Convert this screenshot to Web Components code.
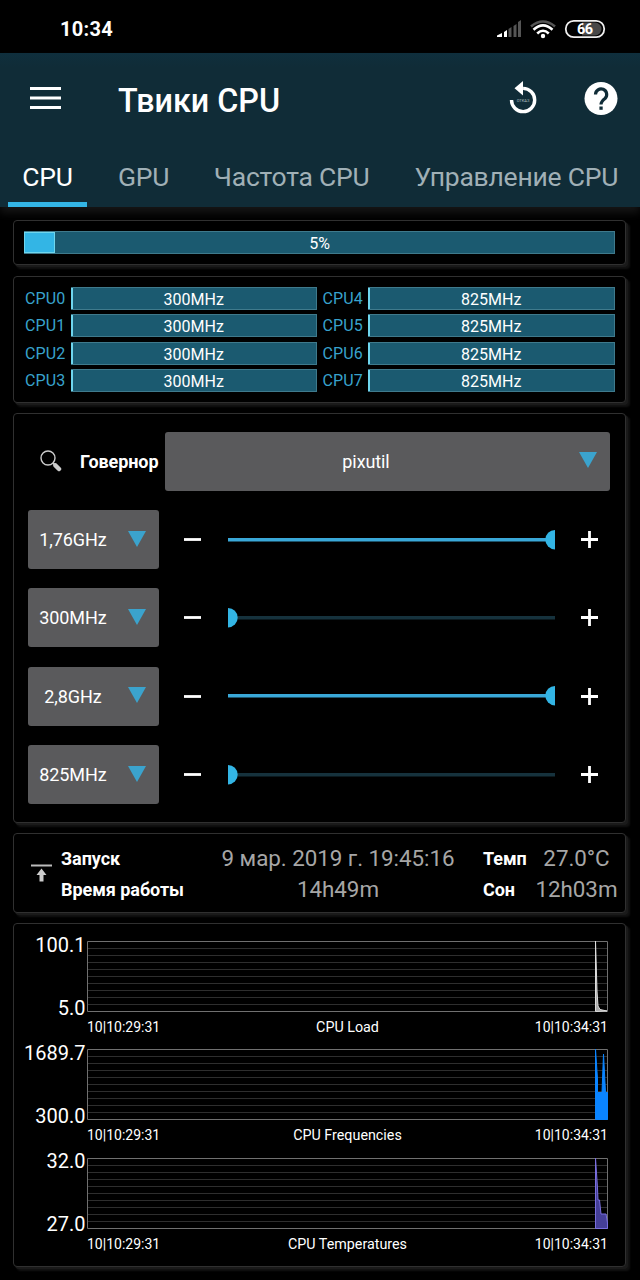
<!DOCTYPE html>
<html lang="ru">
<head>
<meta charset="utf-8">
<title>Твики CPU</title>
<style>
  body {
    margin: 0;
    width: 640px;
    height: 1280px;
    overflow: hidden;
    background: #000;
    color: #fff;
    font-family: Roboto, "Noto Sans", sans-serif;
  }
</style>
</head>
<body>
<tweak-app></tweak-app>
<script>
class StatusBar extends HTMLElement {
  constructor() {
    super();
    this.attachShadow({ mode: 'open' });
    this.shadowRoot.innerHTML = `
      <style>
        :host {
          display: flex;
          align-items: center;
          box-sizing: border-box;
          height: 53px;
          padding: 4px 34px 0 60px;
          font-size: 20px;
          font-weight: 700;
          letter-spacing: .3px;
        }
        .time { flex: 1; }
        svg { display: block; }
      </style>
      <span class="time">10:34</span>
      <svg width="110" height="22" viewBox="496 17 110 22">
        <path d="M497 36v-1.500l5-2.500v4z" fill="#fff"/>
        <path d="M504 31l3-2v7h-3z" fill="#fff"/>
        <path d="M508.500 28l3-2v10h-3zM513.500 25l3-2v13h-3zM518 21l3-2v17h-3z" fill="#555"/>
        <g fill="none" stroke-width="2.600">
          <path d="M531 25.500Q543 15.500 555 25.500" stroke="#555"/>
          <path d="M533.500 28.700Q543 20 552.500 28.700M537.200 32.500Q543 27 548.800 32.500" stroke="#fff"/>
        </g>
        <circle cx="543" cy="35" r="2.200" fill="#fff"/>
        <path d="M582 21.500h13a6.500 6.500 0 0 1 0 13h-13z" fill="#484848"/>
        <rect x="565.800" y="19.800" width="38.400" height="16.400" rx="8" fill="none" stroke="#eee" stroke-width="1.800"/>
        <text x="584.800" y="33.200" text-anchor="middle" font-size="14.500" font-weight="700" letter-spacing="-.5" fill="#fff">66</text>
      </svg>
    `;
  }
}
customElements.define('status-bar', StatusBar);

class AppBar extends HTMLElement {
  constructor() {
    super();
    this.attachShadow({ mode: 'open' });
    this.shadowRoot.innerHTML = `
      <style>
        :host {
          display: block;
          box-sizing: border-box;
          height: 154px;
          background: linear-gradient(#0f2f3d, #102c37 14px);
          box-shadow: 0 6px 8px #151515;
        }
        .top {
          display: flex;
          align-items: center;
          height: 93px;
          padding-left: 30px;
        }
        .title {
          flex: 1;
          margin: 2px 0 0 57px;
          font-size: 32.3px;
          font-weight: 500;
        }
        .tabs {
          display: flex;
          height: 61px;
        }
        svg { display: block; }
        .menu { margin-top: -4px; }
      </style>
      <div class="top">
        <svg class="menu" width="31" height="22" viewBox="0 0 31 22">
          <path d="M0 1.500h31M0 11h31M0 20.500h31" stroke="#fff" stroke-width="3"/>
        </svg>
        <span class="title">Твики CPU</span>
        <svg width="135" height="40" viewBox="505 80 135 40">
          <path d="M511.500 100a11.600 11.600 0 1 0 11.600-11.600" fill="none" stroke="#fff" stroke-width="3.400"/>
          <path d="M514.500 88.200l8.500-7.200v14.500z" fill="#fff"/>
          <text x="523" y="101.500" text-anchor="middle" font-size="4" fill="#b5c0c5">ОТКАЗ</text>
          <circle cx="601" cy="98.500" r="16.500" fill="#fff"/>
          <path d="M595.500 94.500a5.600 5.600 0 1 1 9.500 4q-4 3.200-4 6" fill="none" stroke="#102c37" stroke-width="3.200"/>
          <path d="M599.400 106.500h3.300v3.300h-3.300z" fill="#102c37"/>
        </svg>
      </div>
      <div class="tabs"><slot></slot></div>
    `;
  }
}
customElements.define('app-bar', AppBar);

class AppTab extends HTMLElement {
  constructor() {
    super();
    this.attachShadow({ mode: 'open' });
    this.shadowRoot.innerHTML = `
      <style>
        :host {
          display: block;
          box-sizing: border-box;
          height: 61px;
          line-height: 61px;
          font-size: 26.5px;
          letter-spacing: -.22px;
          color: #a0b0b6;
          white-space: nowrap;
          border-bottom: 5px solid transparent;
        }
        :host([active]) {
          color: #fff;
          border-color: #33b5e5;
        }
      </style>
      <slot></slot>
    `;
  }
}
customElements.define('app-tab', AppTab);

class TweakCard extends HTMLElement {
  constructor() {
    super();
    this.attachShadow({ mode: 'open' });
    this.shadowRoot.innerHTML = `
      <style>
        :host {
          display: block;
          box-sizing: border-box;
          width: 613px;
          margin-left: 13px;
          background: #000;
          border: 1px solid #303030;
          border-radius: 4px;
          box-shadow: 2px 2px 0 #1a1a1a, 4px 4px 2px #121212;
        }
      </style>
      <slot></slot>
    `;
  }
}
customElements.define('tweak-card', TweakCard);

class LoadBar extends HTMLElement {
  connectedCallback() {
    const fill = this.getAttribute('fill') || '1px';
    this.attachShadow({ mode: 'open' });
    this.shadowRoot.innerHTML = `
      <style>
        :host {
          display: grid;
          box-sizing: border-box;
          height: 23px;
          background: #1b5a70;
          border: 1px solid #3f7a8c;
          border-left: 0;
          font-size: 16px;
          line-height: 23px;
          text-align: center;
        }
        div {
          grid-area: 1 / 1;
          height: 21px;
        }
        .text { padding-left: 1px; }
        .fill {
          width: ${fill};
          box-sizing: border-box;
          background: #33b5e5;
          border: 1px solid #6fd6ee;
        }
      </style>
      <div class="fill"></div>
      <div class="text"><slot></slot></div>
    `;
  }
}
customElements.define('load-bar', LoadBar);

class CoreRow extends HTMLElement {
  connectedCallback() {
    this.attachShadow({ mode: 'open' });
    this.shadowRoot.innerHTML = `
      <style>
        :host {
          display: grid;
          grid-template-columns: 45.5px 246.5px;
          align-items: center;
          height: 23px;
          font-size: 16px;
          line-height: 25px;
        }
        .name { color: #38a3cd; letter-spacing: .15px; }
      </style>
      <span class="name">${this.getAttribute('name')}</span>
      <load-bar fill="2px">${this.getAttribute('value')}</load-bar>
    `;
  }
}
customElements.define('core-row', CoreRow);

class DropDown extends HTMLElement {
  constructor() {
    super();
    this.attachShadow({ mode: 'open' });
    this.shadowRoot.innerHTML = `
      <style>
        :host {
          display: flex;
          align-items: center;
          box-sizing: border-box;
          width: 131px;
          height: 59px;
          padding-right: 13px;
          background: #5a5a5c;
          border-radius: 3px;
          font-size: 18px;
          letter-spacing: -.1px;
        }
        .value {
          flex: 1;
          text-align: center;
          padding-right: var(--value-shift, 11px);
        }
        svg { display: block; margin-top: -2px; }
      </style>
      <span class="value"><slot></slot></span>
      <svg width="18" height="16"><path d="M0 0h18L9 16z" fill="#3ba3cd"/></svg>
    `;
  }
}
customElements.define('drop-down', DropDown);

class FreqRow extends HTMLElement {
  connectedCallback() {
    const full = this.hasAttribute('full');
    this.attachShadow({ mode: 'open' });
    this.shadowRoot.innerHTML = `
      <style>
        :host {
          display: flex;
          align-items: center;
          height: 59px;
        }
        drop-down { margin-right: 25px; }
        svg { display: block; }
        .track { margin: 0 26px 0 27px; }
      </style>
      <drop-down>${this.getAttribute('value')}</drop-down>
      <svg width="17" height="17"><path d="M0 8.500h17" stroke="#fff" stroke-width="2.800"/></svg>
      <svg class="track" width="327" height="20">
        <path d="M0 9.700h327" stroke="${full ? '#3aa8d8' : '#16323d'}" stroke-width="3.500"/>
        <circle cx="${full ? 327 : 0}" cy="9.700" r="9.700" fill="#33b5e5"/>
      </svg>
      <svg width="17" height="17"><path d="M0 8.500h17M8.500 0v17" stroke="#fff" stroke-width="2.800"/></svg>
    `;
  }
}
customElements.define('freq-row', FreqRow);

class InfoPanel extends HTMLElement {
  constructor() {
    super();
    this.attachShadow({ mode: 'open' });
    this.shadowRoot.innerHTML = `
      <style>
        :host {
          display: flex;
          padding: 9px 0 0 17px;
        }
        .grid {
          display: grid;
          grid-template-columns: 132px 290px 48px 91px;
          grid-auto-rows: 31px;
          align-items: center;
          margin-left: 9px;
          white-space: nowrap;
        }
        b { font-size: 18px; letter-spacing: -.05px; }
        span {
          margin-top: -2px;
          color: #a6a6a6;
          font-size: 22.4px;
          letter-spacing: -.05px;
          text-align: center;
        }
        svg { display: block; margin-top: 21px; }
      </style>
      <svg width="21" height="18">
        <path d="M0 1.500h21" stroke="#bbb" stroke-width="2"/>
        <path d="M10.500 4.500l5 6.500h-3v6.500h-4V11h-3z" fill="#ccc"/>
      </svg>
      <div class="grid">
        <b>Запуск</b><span>9 мар. 2019 г. 19:45:16</span><b>Темп</b><span>27.0°C</span>
        <b>Время работы</b><span>14h49m</span><b>Сон</b><span>12h03m</span>
      </div>
    `;
  }
}
customElements.define('info-panel', InfoPanel);

class StatChart extends HTMLElement {
  connectedCallback() {
    const color = this.getAttribute('color');
    let lines = '';
    for (let i = 1; i < 10; i++) {
      lines += `M0 ${i * 7 + 0.5}h521`;
    }
    this.attachShadow({ mode: 'open' });
    this.shadowRoot.innerHTML = `
      <style>
        :host {
          display: grid;
          grid-template-columns: 73px 521px;
          grid-template-rows: 71px 37.3px;
        }
        .axis {
          display: flex;
          flex-direction: column;
          justify-content: space-between;
          align-items: flex-end;
          box-sizing: border-box;
          padding-right: 1.5px;
          margin: -8.4px 0 -7.6px;
          font-size: 20px;
          line-height: 24px;
        }
        .legend {
          grid-column: 2;
          display: flex;
          justify-content: space-between;
          font-size: 14px;
          line-height: 31px;
        }
        .name { font-size: 14.3px; }
        svg { display: block; }
      </style>
      <div class="axis">
        <span>${this.getAttribute('max')}</span>
        <span>${this.getAttribute('min')}</span>
      </div>
      <svg width="521" height="71">
        <path d="${lines}" stroke="#2e2e2e"/>
        <path d="M.5.500h520v70H.5z" fill="none" stroke="#707070"/>
        <path d="${this.getAttribute('area')}" fill="${this.getAttribute('fill')}" stroke="${color}"/>
      </svg>
      <div class="legend">
        <span>10|10:29:31</span>
        <span class="name">${this.getAttribute('name')}</span>
        <span>10|10:34:31</span>
      </div>
    `;
  }
}
customElements.define('stat-chart', StatChart);

class TweakApp extends HTMLElement {
  constructor() {
    super();
    this.attachShadow({ mode: 'open' });
    this.shadowRoot.innerHTML = `
      <style>
        :host { display: block; }
        main {
          display: flex;
          flex-direction: column;
          padding-top: 13px;
        }
        .t1 { width: 79px; margin-left: 8px; text-align: center; }
        .t2 { margin-left: 31px; }
        .t3 { margin-left: 44.5px; }
        .t4 { margin-left: 45px; }
        .load { height: 45px; margin-bottom: 11px; padding: 10px; }
        .cores { height: 127px; margin-bottom: 10px; padding: 9.3px 0 0 11px; }
        .cores div {
          display: grid;
          grid-template-columns: 292px 292px;
          grid-auto-flow: column;
          grid-template-rows: repeat(4, 23px);
          gap: 4.2px 5.5px;
        }
        .control {
          height: 410px;
          margin-bottom: 10px;
          padding: 17.5px 0 0 14.4px;
        }
        .governor {
          display: flex;
          align-items: center;
          margin-bottom: 19.5px;
          padding-left: 11.6px;
        }
        .governor svg { margin-right: 18px; }
        .governor b { width: 85px; font-size: 18px; letter-spacing: -.1px; line-height: 23px; }
        .governor drop-down { width: 445px; --value-shift: 12px; }
        .rows { display: grid; row-gap: 19.4px; }
        .info { height: 80px; margin-bottom: 10px; }
        .charts { height: 344px; padding-top: 17px; }
      </style>
      <status-bar></status-bar>
      <app-bar>
        <app-tab class="t1" active>CPU</app-tab>
        <app-tab class="t2">GPU</app-tab>
        <app-tab class="t3">Частота CPU</app-tab>
        <app-tab class="t4">Управление CPU</app-tab>
      </app-bar>
      <main>
        <tweak-card class="load"><load-bar fill="31px">5%</load-bar></tweak-card>
        <tweak-card class="cores"><div></div></tweak-card>
        <tweak-card class="control">
          <div class="governor">
            <svg width="22" height="22">
              <circle cx="8" cy="8" r="7" fill="none" stroke="#ccc" stroke-width="1.400"/>
              <path d="M13 13l2 2" stroke="#ccc" stroke-width="2"/>
              <path d="M15.500 15.500l3.500 3.500" stroke="#ccc" stroke-width="4.500" stroke-linecap="round"/>
            </svg>
            <b>Говернор</b>
            <drop-down>pixutil</drop-down>
          </div>
          <div class="rows">
            <freq-row value="1,76GHz" full></freq-row>
            <freq-row value="300MHz"></freq-row>
            <freq-row value="2,8GHz" full></freq-row>
            <freq-row value="825MHz"></freq-row>
          </div>
        </tweak-card>
        <tweak-card class="info"><info-panel></info-panel></tweak-card>
        <tweak-card class="charts">
          <stat-chart name="CPU Load" max="100.1" min="5.0" color="#ddd" fill="#aaa"
            area="M508.500 70.500V0L510 50L511 65L513 68.500L520 70z"></stat-chart>
          <stat-chart name="CPU Frequencies" max="1689.7" min="300.0" color="#0a84ff" fill="#0a84ff"
            area="M508.500 70.500V0L510.500 30V43.500H515L516.500 5L518.500 43.500H520.500V70.500z"></stat-chart>
          <stat-chart name="CPU Temperatures" max="32.0" min="27.0" color="#7a6fe0" fill="#453f98"
            area="M508.500 70.500V0L510.500 30L511 42H512.500L514 56H519L520.500 65V70.500z"></stat-chart>
        </tweak-card>
      </main>
    `;

    const cores = this.shadowRoot.querySelector('.cores div');
    for (let i = 0; i < 8; i++) {
      const row = document.createElement('core-row');
      row.setAttribute('name', 'CPU' + i);
      row.setAttribute('value', i < 4 ? '300MHz' : '825MHz');
      cores.appendChild(row);
    }
  }
}
customElements.define('tweak-app', TweakApp);
</script>
</body>
</html>
